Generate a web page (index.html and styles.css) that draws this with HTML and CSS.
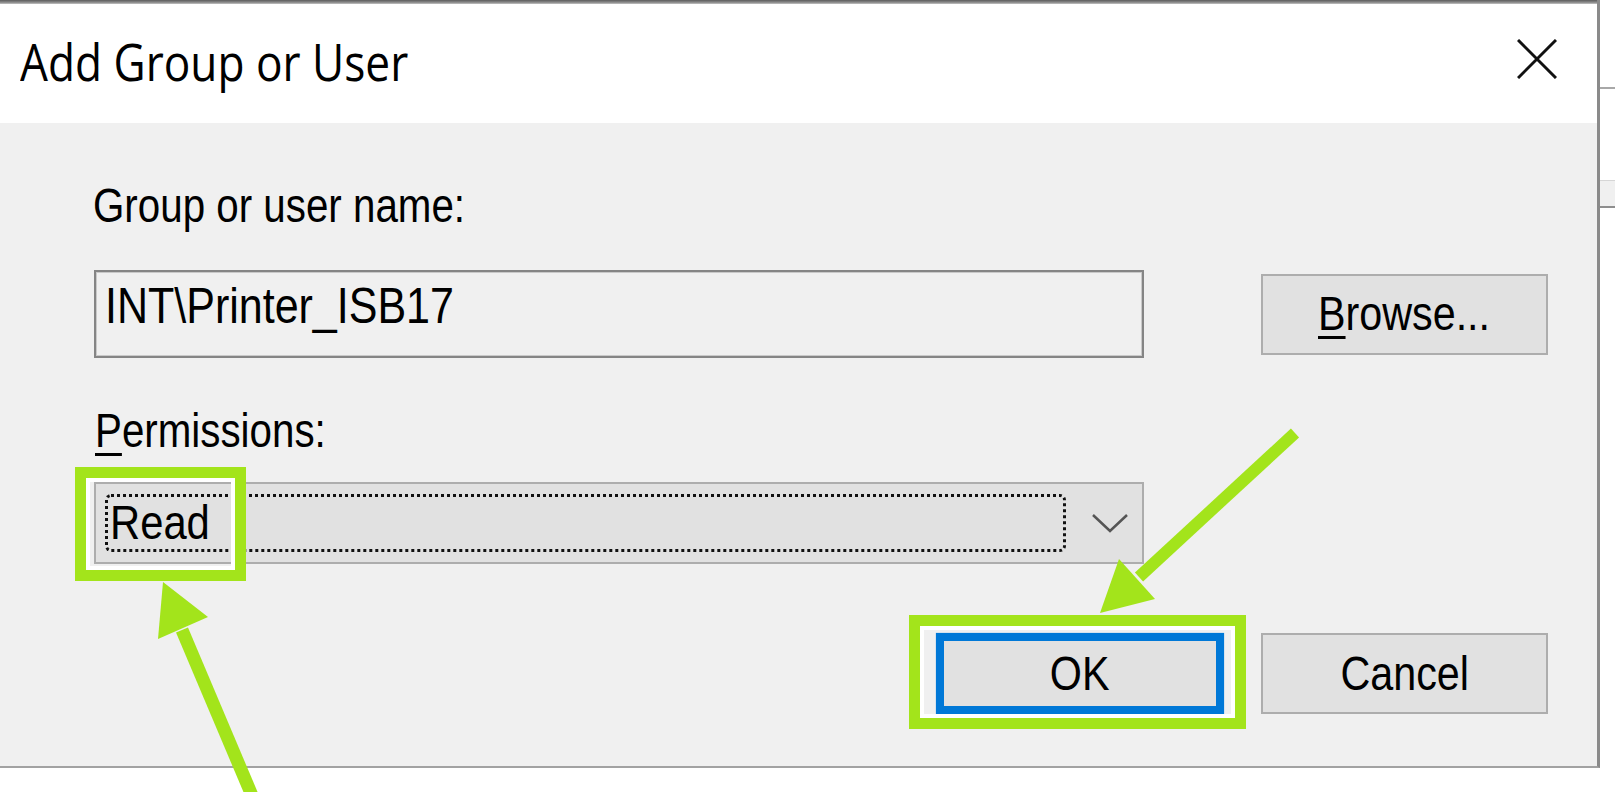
FILE: index.html
```html
<!DOCTYPE html>
<html lang="en">
<head>
<meta charset="utf-8">
<title>Add Group or User</title>
<link rel="stylesheet" href="styles.css">
</head>
<body>
<div class="screen">
  <div class="dialog">
    <div class="topedge"></div>
    <div class="titlebar">
      <span class="title">Add Group or User</span>
      <span class="close">
        <svg width="40" height="40" viewBox="0 0 40 40"><path d="M1 1L39 39M39 1L1 39" stroke="#111" stroke-width="3" fill="none"/></svg>
      </span>
    </div>
    <div class="content">
      <div class="label label-name"><span class="t">Group or user name:</span></div>
      <div class="row">
        <div class="textbox"><span class="t t-box">INT\Printer_ISB17</span></div>
        <div class="btn"><span class="t tc"><u>B</u>rowse...</span></div>
      </div>
      <div class="label label-perm"><span class="t"><u>P</u>ermissions:</span></div>
      <div class="combo">
        <div class="focus"><span class="t t-read">Read</span></div>
        <div class="chev">
          <svg width="36" height="20" viewBox="0 0 36 20"><path d="M1 2L18 18L35 2" stroke="#555" stroke-width="2.5" fill="none"/></svg>
        </div>
      </div>
      <div class="actions">
        <div class="btn btn-default"><span class="t tc">OK</span></div>
        <div class="btn"><span class="t tc">Cancel</span></div>
      </div>
    </div>
  </div>
  <div class="outside">
    <div class="ln"></div>
    <div class="band"></div>
  </div>
</div>
<div class="mark mark-read"></div>
<div class="mark mark-ok"></div>
<svg class="arrows" width="1615" height="792" viewBox="0 0 1615 792">
  <line x1="256" y1="805" x2="182" y2="630" stroke="#a3e41b" stroke-width="13"/>
  <polygon points="163,582 158,639 208,617" fill="#a3e41b"/>
  <line x1="1295" y1="433" x2="1139" y2="577" stroke="#a3e41b" stroke-width="12"/>
  <polygon points="1100,613 1155,599 1119,559" fill="#a3e41b"/>
</svg>
</body>
</html>
```
FILE: styles.css
```css
html, body {
  margin: 0;
  padding: 0;
  background: #ffffff;
}
body {
  width: 1615px;
  height: 792px;
  overflow: hidden;
  position: relative;
  font-family: "Liberation Sans", Arial, sans-serif;
  font-size: 48px;
  line-height: 48px;
  color: #000;
}
.screen {
  display: flex;
  align-items: flex-start;
}
.dialog {
  width: 1600px;
  height: 768px;
  box-sizing: border-box;
  border-right: 3px solid #8a8a8a;
  border-bottom: 2px solid #a2a2a2;
  display: flex;
  flex-direction: column;
  background: #f0f0f0;
}
.topedge {
  height: 4px;
  background: linear-gradient(#5c5c5c, #8c8c8c 60%, #c4c4c4);
}
.titlebar {
  height: 119px;
  background: #ffffff;
  display: flex;
  align-items: center;
  justify-content: space-between;
  padding: 0 40px 0 20px;
}
.title {
  display: inline-block;
  font-family: "Open Sans", "Noto Sans", sans-serif;
  font-size: 52px;
  line-height: 60px;
  color: #000;
  transform: scaleX(0.85);
  transform-origin: left center;
  white-space: nowrap;
  margin-top: -6px;
}
.close {
  display: flex;
  width: 40px;
  height: 40px;
  margin-top: -9px;
}
.content {
  flex: 1;
  padding: 59px 49px 0 94px;
  display: flex;
  flex-direction: column;
}
.t {
  display: inline-block;
  white-space: nowrap;
  transform: scaleX(0.84);
  transform-origin: left center;
}
.tc {
  transform-origin: center center;
  transform: scaleX(0.86);
}
.t-box {
  transform: scaleX(0.86);
}
.t-read {
  transform: scaleX(0.87);
}
.label {
  height: 48px;
  white-space: nowrap;
}
.label-name {
  margin-left: -1px;
}
.label-perm {
  margin-top: 49px;
  margin-left: 1px;
}
u {
  text-decoration-thickness: 3px;
  text-underline-offset: 6px;
}
.row {
  margin-top: 40px;
  height: 88px;
  display: flex;
  align-items: center;
  justify-content: space-between;
}
.textbox {
  width: 1050px;
  height: 88px;
  box-sizing: border-box;
  border: 2px solid #858585;
  box-shadow: inset 0 0 0 1px #c9c9c9;
  background: #f0f0f0;
  padding: 10px 0 0 9px;
  font-size: 50px;
  white-space: nowrap;
}
.btn {
  width: 287px;
  height: 81px;
  box-sizing: border-box;
  border: 2px solid #adadad;
  background: #e1e1e1;
  display: flex;
  align-items: center;
  justify-content: center;
  white-space: nowrap;
}
.btn .t {
  height: 48px;
}
.combo {
  margin-top: 27px;
  width: 1050px;
  height: 82px;
  box-sizing: border-box;
  border: 2px solid #adadad;
  background: #e1e1e1;
  display: flex;
  padding: 10px 0 10px 9px;
}
.focus {
  flex: 1;
  border: 3px dotted #111111;
  border-radius: 6px;
  padding-left: 2px;
  display: flex;
  align-items: center;
}
.chev {
  width: 76px;
  display: flex;
  align-items: center;
  justify-content: center;
  padding-left: 12px;
  box-sizing: border-box;
}
.actions {
  margin-top: 69px;
  display: flex;
  justify-content: flex-end;
  gap: 37px;
}
.btn-default {
  width: 288px;
  border: 8px solid #0078d7;
  box-shadow: 0 0 1px #5aa6e6;
}
.outside {
  width: 15px;
  padding-top: 87px;
}
.ln {
  height: 2px;
  background: #a8a8a8;
}
.band {
  margin-top: 91px;
  height: 25px;
  background: #f0f0f0;
  border-top: 1px solid #d6d6d6;
  border-bottom: 2px solid #8e8e8e;
}
.mark {
  position: absolute;
  box-sizing: border-box;
  border: 11px solid #a3e41b;
  box-shadow: inset 0 0 0 4px #ffffff;
}
.mark-read {
  left: 75px;
  top: 467px;
  width: 171px;
  height: 114px;
}
.mark-ok {
  left: 909px;
  top: 615px;
  width: 337px;
  height: 114px;
}
.arrows {
  position: absolute;
  left: 0;
  top: 0;
}
```
